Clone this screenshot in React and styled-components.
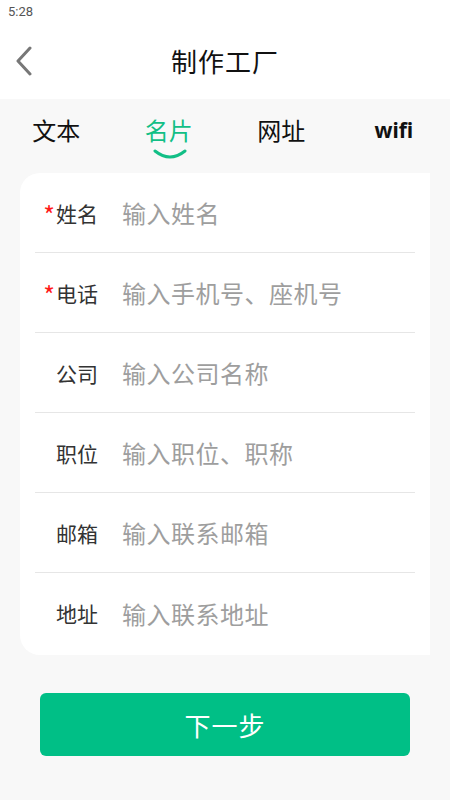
import React, {useState} from 'react';
import styled, {createGlobalStyle} from 'styled-components';

const GlobalStyle = createGlobalStyle`
    html, body {
        margin: 0;
        padding: 0;
        background: #f8f8f8;
        font-family: "Noto Sans CJK SC", "Noto Sans", Roboto, sans-serif;
    }
    * { box-sizing: border-box; }
`

const Page = styled.div`
    width: 450px;
    min-height: 800px;
    background: #f8f8f8;
    display: flex;
    flex-direction: column;
`

const Top = styled.div`
    background: #ffffff;
`

const StatusBar = styled.div`
    height: 24px;
    padding: 3px 0 0 8px;
    font-family: Roboto, "Noto Sans", sans-serif;
    font-size: 13px;
    color: #555;
    line-height: 18px;
`

const NavBar = styled.div`
    height: 75px;
    display: flex;
    align-items: center;
    justify-content: center;
    position: relative;
`

const BackBtn = styled.div`
    position: absolute;
    left: 12px;
    top: 22px;
    width: 24px;
    height: 30px;
    display: flex;
    align-items: center;
    justify-content: center;
`

const Title = styled.div`
    font-size: 26px;
    color: #111;
    line-height: 30px;
    margin-top: -2px;
    letter-spacing: 1px;
`

const Tabs = styled.div`
    display: grid;
    grid-template-columns: repeat(4, 1fr);
    height: 74px;
`

const Tab = styled.div`
    display: flex;
    flex-direction: column;
    align-items: center;
    padding-top: 14px;
    font-size: ${p => p.$latin ? '21px' : '24px'};
    font-weight: ${p => p.$latin ? 700 : 400};
    font-family: ${p => p.$latin ? '"Noto Sans", "Open Sans", sans-serif' : '"Noto Sans CJK SC", sans-serif'};
    color: ${p => p.$active ? '#12bf86' : '#111'};
    line-height: 34px;
    cursor: pointer;
`

const Smile = styled.svg`
    display: block;
    margin-top: 2px;
    margin-left: 2px;
`

const Card = styled.div`
    margin-left: 20px;
    width: 410px;
    background: #ffffff;
    border-radius: 20px 0 0 20px;
    padding: 0 15px 2px;
`

const Row = styled.div`
    height: 80px;
    display: flex;
    align-items: center;
    border-bottom: ${p => p.$last ? 'none' : '1px solid #e6e6e6'};
`

const Label = styled.div`
    width: 63px;
    text-align: right;
    font-size: 21px;
    color: #333;
    flex-shrink: 0;
`

const Star = styled.span`
    color: #ff1a1a;
    font-size: 25px;
    line-height: 1;
    margin-right: 1px;
    position: relative;
    top: 3px;
`

const Placeholder = styled.div`
    margin-left: 24px;
    font-size: 24px;
    letter-spacing: 0.5px;
    color: #9e9e9e;
`

const NextButton = styled.button`
    margin: 38px 40px 0;
    height: 63px;
    border: none;
    border-radius: 6px;
    background: #00bf86;
    color: #ffffff;
    font-family: "Noto Sans CJK SC", sans-serif;
    font-size: 26px;
    letter-spacing: 1px;
    cursor: pointer;
`

const tabs = [
    {name: '文本'},
    {name: '名片'},
    {name: '网址'},
    {name: 'wifi', latin: true},
];

const fields = [
    {label: '姓名', hint: '输入姓名', must: true},
    {label: '电话', hint: '输入手机号、座机号', must: true},
    {label: '公司', hint: '输入公司名称'},
    {label: '职位', hint: '输入职位、职称'},
    {label: '邮箱', hint: '输入联系邮箱'},
    {label: '地址', hint: '输入联系地址'},
];

const App = () => {
    const [selected, setSelected] = useState(1);

    return (
        <Page>
            <GlobalStyle/>
            <Top>
                <StatusBar>5:28</StatusBar>
                <NavBar>
                    <BackBtn>
                        <svg width="20" height="30" viewBox="0 0 20 30">
                            <polyline points="16,2 4,15 16,28" fill="none" stroke="#777" strokeWidth="3" strokeLinecap="round" strokeLinejoin="round"/>
                        </svg>
                    </BackBtn>
                    <Title>制作工厂</Title>
                </NavBar>
            </Top>
            <Tabs>
                {
                    tabs.map((item, i) => (
                        <Tab key={item.name} $active={i === selected} $latin={item.latin} onClick={() => setSelected(i)}>
                            {item.name}
                            {i === selected &&
                                <Smile width="34" height="10" viewBox="0 0 34 10">
                                    <path d="M2 2 Q17 14 32 2" fill="none" stroke="#12bf86" strokeWidth="3" strokeLinecap="round"/>
                                </Smile>
                            }
                        </Tab>
                    ))
                }
            </Tabs>
            <Card>
                {
                    fields.map((f, i) => (
                        <Row key={f.label} $last={i === fields.length - 1}>
                            <Label>{f.must && <Star>*</Star>}{f.label}</Label>
                            <Placeholder>{f.hint}</Placeholder>
                        </Row>
                    ))
                }
            </Card>
            <NextButton type="button">下一步</NextButton>
        </Page>
    )
}

export default App;
